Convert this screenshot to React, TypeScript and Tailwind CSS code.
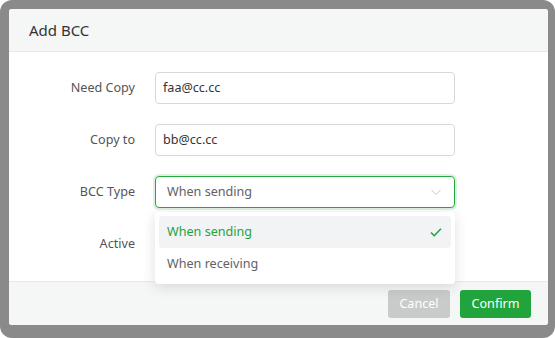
import React from "react";

const font = { fontFamily: '"Noto Sans", "Open Sans", sans-serif' };

function Row({ label, children }: { label: string; children: React.ReactNode }) {
  return (
    <div className="flex items-center h-[32px]">
      <div className="w-[126px] text-right text-[12.6px] text-[#555]">{label}</div>
      <div className="ml-[20px] w-[300px] h-full relative">{children}</div>
    </div>
  );
}

export default function App() {
  return (
    <div className="w-[555px] h-[338px] bg-white" style={font}>
      <div className="h-full rounded-[12px] bg-[#8a8a8a] pt-[9px] pl-[9px] pr-[7px] pb-[13px] flex">
        <div className="flex-1 bg-white rounded-[3px] flex flex-col overflow-hidden">
          <div className="h-[43px] shrink-0 bg-[#f5f7f7] border-b border-[#e6e8e8] pl-[20px] flex items-center text-[15px] text-[#333]">
            Add BCC
          </div>
          <div className="flex-1 pt-[20px] flex flex-col gap-[20px]">
            <Row label="Need Copy">
              <div className="h-full border border-[#d4d7dc] rounded-[4px] flex items-center px-[7px] text-[12.6px] text-[#333]">
                faa@cc.cc
              </div>
            </Row>
            <Row label="Copy to">
              <div className="h-full border border-[#d4d7dc] rounded-[4px] flex items-center px-[7px] text-[12.6px] text-[#333]">
                bb@cc.cc
              </div>
            </Row>
            <Row label="BCC Type">
              <div className="h-full border border-[#24a83f] rounded-[4px] flex items-center justify-between pl-[11px] pr-[12px] text-[12.6px] text-[#606266] shadow-[0_0_0_2px_rgba(36,168,63,0.15)]">
                <span>When sending</span>
                <svg width="12" height="12" viewBox="0 0 12 12" fill="none">
                  <path d="M1.5 4l4.5 4.5L10.5 4" stroke="#c4c7cc" strokeWidth="1" />
                </svg>
              </div>
              <div className="absolute z-10 left-0 top-[36px] w-[300px] bg-white rounded-[4px] shadow-[0_3px_14px_rgba(0,0,0,0.13)] py-[4px] px-[4px]">
                <div className="h-[32px] rounded-[4px] bg-[#f2f3f5] flex items-center justify-between pl-[8px] pr-[8px] text-[12.6px] text-[#1fa33b]">
                  <span>When sending</span>
                  <svg width="14" height="14" viewBox="0 0 14 14" fill="none">
                    <path d="M2 7.5l3.2 3.2L12 3.8" stroke="#1fa33b" strokeWidth="1.5" />
                  </svg>
                </div>
                <div className="h-[32px] flex items-center pl-[8px] text-[12.6px] text-[#606266]">
                  When receiving
                </div>
              </div>
            </Row>
            <Row label="Active">
              <div />
            </Row>
          </div>
          <div className="h-[44px] shrink-0 bg-[#f5f7f7] border-t border-[#e6e8e8] flex items-center justify-end gap-[10px] pr-[17px] pt-[1px]">
            <div className="w-[62px] h-[28px] rounded-[3px] bg-[#c9caca] text-white text-[12.6px] flex items-center justify-center">
              Cancel
            </div>
            <div className="w-[71px] h-[28px] rounded-[3px] bg-[#21a43c] text-white text-[12.6px] flex items-center justify-center">
              Confirm
            </div>
          </div>
        </div>
      </div>
    </div>
  );
}
